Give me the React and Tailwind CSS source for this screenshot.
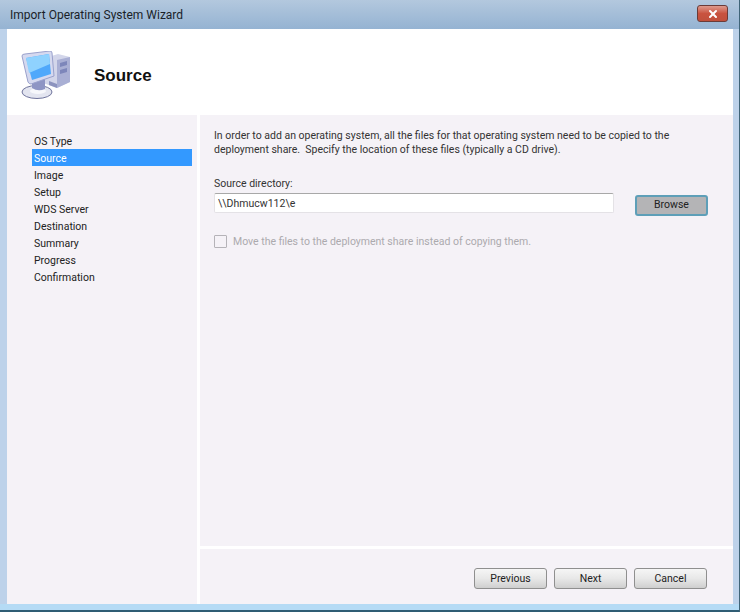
import { X } from "lucide-react";

const steps = ["OS Type", "Source", "Image", "Setup", "WDS Server", "Destination", "Summary", "Progress", "Confirmation"];

const WizardButton = ({ label }) => (
  <button className="h-[21px] w-[73px] rounded-[3px] border border-[#8f8f8f] bg-gradient-to-b from-[#f6f6f6] via-[#e8e8e8] to-[#cfcfcf] pt-[2px] text-[10.5px] leading-none text-[#222]">
    {label}
  </button>
);

const ComputerIcon = () => (
  <svg width="50" height="48" viewBox="0 0 50 48" className="block">
    {/* tower */}
    <path d="M24 7 L37 3 L49 6 L49 31 L36 37 L22 32 Z" fill="#d3d6ea" />
    <path d="M36 9 L49 6 L49 31 L36 37 Z" fill="#a9afd4" />
    <path d="M39 12 L46 10 L46 14 L39 16 Z M39 19 L46 17 L46 21 L39 23 Z" fill="#7d86ba" />
    <path d="M28 30 L36 33 L36 37 L28 34 Z" fill="#8d94bf" />
    {/* base */}
    <ellipse cx="16" cy="41" rx="15" ry="6.5" fill="#e3e5f0" stroke="#6f749c" />
    <ellipse cx="17" cy="40" rx="8" ry="3" fill="#f6f7fb" />
    <path d="M11 28 L24 26 L24 38 Q17 41 11 37 Z" fill="#8e95c4" />
    {/* monitor */}
    <path d="M1 5 Q1 3 4 3 L29 0 Q31 0 31 2 L33 25 L10 33 Q8 33 7 31 Z" fill="#d5d9ef" stroke="#9aa1cc" />
    <path d="M5 7 L28 3 L30 23 L11 29 Z" fill="#4fa8fb" />
    <path d="M5 7 L28 3 L29 13 L8 22 Z" fill="#8fd2fe" />
  </svg>
);

export default function App() {
  return (
    <div className="flex h-[612px] w-[740px] flex-col overflow-hidden border-r border-[#3f6478] bg-[#bdd2ea] font-['Roboto','Liberation_Sans',sans-serif] text-[#1c1c1c]">
      {/* title bar */}
      <div className="flex h-[29px] shrink-0 items-center justify-between bg-gradient-to-b from-[#b3c8de] to-[#95b3d2] pl-[10px] pr-[11px]">
        <span className="text-[12px] text-[#1a1f28]">Import Operating System Wizard</span>
        <div className="mb-[2px] flex h-[17px] w-[31px] items-center justify-center rounded-[3px] border border-[#6b3b38] bg-gradient-to-b from-[#dd9a8e] via-[#c9533f] to-[#c0503c]">
          <X size={12} strokeWidth={4} className="text-white" />
        </div>
      </div>

      <div className="ml-[7px] mr-[6px] flex min-h-0 flex-1 flex-col bg-white">
        {/* header */}
        <div className="flex h-[86px] shrink-0 items-center bg-white">
          <div className="ml-[14px] mt-[5px]">
            <ComputerIcon />
          </div>
          <h1 className="ml-[23px] mt-[8px] font-['Liberation_Sans',sans-serif] text-[17px] font-bold text-[#111]">Source</h1>
        </div>

        <div className="flex min-h-0 flex-1 gap-[3px] bg-white">
          {/* step list */}
          <div className="w-[190px] shrink-0 bg-[#f5f2f7] pl-[25px] pr-[5px] pt-[17px]">
            {steps.map((step) => (
              <div
                key={step}
                className={`flex h-[17px] items-center pl-[2px] pt-[3px] text-[10.5px] ${
                  step === "Source" ? "bg-[#3399ff] text-white" : "text-[#222]"
                }`}
              >
                {step}
              </div>
            ))}
          </div>

          {/* page content */}
          <div className="flex min-w-0 flex-1 flex-col bg-white">
            <div className="flex-1 bg-[#f5f2f7] pl-[14px] pr-[25px] pt-[14px] text-[#333]">
              <p className="whitespace-nowrap text-[10.5px] leading-[14px]">
                In order to add an operating system, all the files for that operating system need to be copied to the
                <br />
                deployment share.&nbsp; Specify the location of these files (typically a CD drive).
              </p>
              <div className="mt-[19px] text-[10.5px] leading-[15px]">Source directory:</div>
              <div className="flex items-start justify-between">
                <div className="mt-[2px] flex h-[20px] w-[400px] items-center rounded-[2px] border border-[#e4e2e6] border-t-[#a8a8a8] bg-white pl-[3px] pt-[2px] text-[10.5px] text-[#333]">
                  {"\\\\Dhmucw112\\e"}
                </div>
                <button className="mt-[4px] h-[21px] w-[73px] rounded-[3px] border-2 border-[#5e9fb8] bg-[#b4b4b6] text-[10.5px] leading-none text-[#222]">
                  Browse
                </button>
              </div>
              <div className="mt-[18px] flex items-center gap-[6px] text-[10.5px] text-[#acaaae]">
                <span className="h-[13px] w-[13px] rounded-[1px] border border-[#b5b3b8]" />
                Move the files to the deployment share instead of copying them.
              </div>
            </div>
            <div className="h-[3px] shrink-0 bg-white" />
            <div className="flex h-[55px] shrink-0 items-start justify-end gap-[7px] bg-[#f5f2f7] pr-[26px] pt-[19px]">
              <WizardButton label="Previous" />
              <WizardButton label="Next" />
              <WizardButton label="Cancel" />
            </div>
          </div>
        </div>
      </div>

      {/* bottom frame */}
      <div className="h-[8px] shrink-0 border-b-2 border-[#2f5d74] bg-[#b5dbf5]" />
    </div>
  );
}
